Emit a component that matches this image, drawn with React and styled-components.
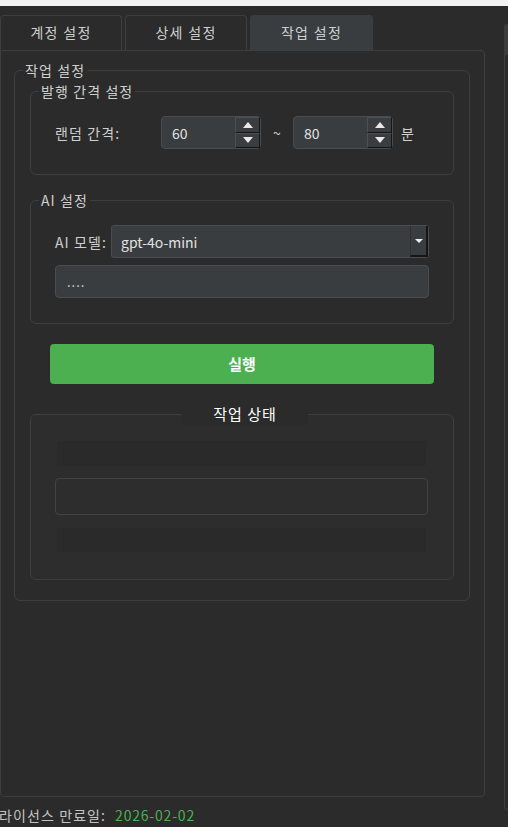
import React from 'react';
import styled, { createGlobalStyle } from 'styled-components';

const fontStack = '"Noto Sans CJK KR", "Noto Sans", "DejaVu Sans", sans-serif';
const pageBg = '#2b2b2b';
const lineColor = '#3e3e3e';
const fieldBg = '#3a3d40';
const fieldBorder = '#4a4d50';
const textColor = '#cfcfcf';
const green = '#4caf50';

const GlobalStyle = createGlobalStyle`
  html, body {
    margin: 0;
    padding: 0;
    background: ${pageBg};
    overflow: hidden;
  }
  body {
    font-family: ${fontStack};
    font-size: 13px;
    color: ${textColor};
  }
`;

const TopStrip = styled.div`
  height: 6px;
  background: #f2f2f2;
`;

const Main = styled.div`
  display: flex;
  align-items: flex-start;
  gap: 19px;
`;

const LeftColumn = styled.div`
  width: 485px;
  flex-shrink: 0;
  display: flex;
  flex-direction: column;
`;

const TabBar = styled.div`
  display: flex;
  gap: 3px;
  margin-top: 9px;
  height: 35px;
`;

const Tab = styled.div`
  width: ${({ w }) => w}px;
  box-sizing: border-box;
  display: flex;
  align-items: center;
  justify-content: center;
  border: 1px solid ${({ active }) => (active ? fieldBg : lineColor)};
  border-bottom: none;
  border-radius: 4px 4px 0 0;
  background: ${({ active }) => (active ? fieldBg : pageBg)};
  color: ${textColor};
  font-size: 14px;
  letter-spacing: 1.3px;
  padding-bottom: 2px;
`;

const Pane = styled.div`
  height: 747px;
  box-sizing: border-box;
  border: 1px solid ${lineColor};
  border-radius: 0 4px 4px 4px;
  padding: 19px 14px 0 13px;
`;

const Group = styled.div`
  position: relative;
  border: 1px solid ${lineColor};
  border-radius: 6px;
  background: ${({ inner }) => inner || 'transparent'};
  padding: ${({ pad }) => pad};
  margin-top: ${({ top }) => top || 0}px;
  display: flex;
  flex-direction: column;
`;

const GroupTitle = styled.span`
  position: absolute;
  top: -9px;
  left: ${({ left }) => left}px;
  padding: 0 2px;
  background: ${pageBg};
  font-size: 14px;
  line-height: 16px;
  letter-spacing: 1.1px;
  color: ${textColor};
`;

const CenterTitle = styled.span`
  position: absolute;
  top: -12px;
  left: 151px;
  width: 126px;
  text-align: center;
  background: ${pageBg};
  font-size: 15px;
  line-height: 22px;
  letter-spacing: 1px;
  color: #ffffff;
`;

const Row = styled.div`
  display: flex;
  align-items: center;
  height: 33px;
`;

const Label = styled.span`
  width: ${({ w }) => w}px;
  flex-shrink: 0;
  font-size: 14px;
  letter-spacing: 1.1px;
  color: ${textColor};
`;

const SpinBox = styled.div`
  width: 100px;
  height: 33px;
  box-sizing: border-box;
  display: flex;
  align-items: center;
  justify-content: space-between;
  background: ${fieldBg};
  border: 1px solid ${fieldBorder};
  border-radius: 4px;
  padding-left: 10px;
  font-size: 14px;
  color: #e2e2e2;
`;

const SpinButtons = styled.div`
  display: flex;
  flex-direction: column;
  align-self: stretch;
  width: 25px;
`;

const SpinButton = styled.div`
  flex: 1;
  display: flex;
  align-items: center;
  justify-content: center;
  background: ${fieldBg};
  border-top: 1px solid #4c5054;
  border-left: 1px solid #4c5054;
  border-bottom: 1px solid #151515;
  border-right: 1px solid #151515;
`;

const Arrow = styled.span`
  width: 0;
  height: 0;
  border-left: 5px solid transparent;
  border-right: 5px solid transparent;
  ${({ dir }) =>
    dir === 'up'
      ? 'border-bottom: 6px solid #e8e8e8;'
      : 'border-top: 6px solid #e8e8e8;'}
`;

const Tilde = styled.span`
  width: 32px;
  text-align: center;
  font-size: 14px;
`;

const Unit = styled.span`
  margin-left: 8px;
  font-size: 14px;
`;

const Combo = styled.div`
  width: 318px;
  height: 33px;
  box-sizing: border-box;
  display: flex;
  align-items: center;
  justify-content: space-between;
  background: ${fieldBg};
  border: 1px solid ${fieldBorder};
  border-radius: 3px;
  padding-left: 9px;
  font-size: 14px;
  color: #e2e2e2;
`;

const ComboButton = styled.div`
  align-self: stretch;
  width: 15px;
  display: flex;
  align-items: center;
  justify-content: center;
  border-left: 1px solid #2e3033;
  border-right: 2px solid #151515;
  border-bottom: 2px solid #151515;
`;

const SmallArrow = styled.span`
  width: 0;
  height: 0;
  border-left: 4px solid transparent;
  border-right: 4px solid transparent;
  border-top: 4px solid #f0f0f0;
`;

const Field = styled.div`
  height: 33px;
  box-sizing: border-box;
  margin-top: 7px;
  display: flex;
  align-items: center;
  background: ${fieldBg};
  border: 1px solid ${fieldBorder};
  border-radius: 4px;
  padding-left: 11px;
  font-size: 13px;
  letter-spacing: 1px;
  color: #d8d8d8;
`;

const RunButton = styled.button`
  margin: 20px 20px 0 20px;
  height: 40px;
  border: none;
  border-radius: 4px;
  background: ${green};
  color: #ffffff;
  font-family: ${fontStack};
  font-size: 15px;
  font-weight: bold;
  padding: 0 0 2px 0;
`;

const StatusRow = styled.div`
  height: ${({ h }) => h}px;
  margin: ${({ m }) => m};
  box-sizing: border-box;
  background: ${({ boxed }) => (boxed ? '#2d2d2d' : '#2a2a2a')};
  border: ${({ boxed }) => (boxed ? '1px solid #424242' : 'none')};
  border-radius: ${({ boxed }) => (boxed ? '4px' : '0')};
`;

const Footer = styled.div`
  margin: 8px 0 0 -1px;
  font-size: 14px;
  line-height: 20px;
  letter-spacing: 1.1px;
  color: #c4c4c4;
  white-space: nowrap;
`;

const DateText = styled.span`
  margin-left: 9px;
  letter-spacing: 0.8px;
  color: ${green};
`;

const RightStub = styled.div`
  margin-top: 18px;
  width: 30px;
  height: 786px;
  flex-shrink: 0;
  box-sizing: border-box;
  border-left: 1px solid ${lineColor};
  border-bottom: 1px solid ${lineColor};
  border-radius: 4px 0 0 4px;
`;

const StubHeader = styled.div`
  height: 31px;
  margin-left: -1px;
  background: ${fieldBg};
  border-radius: 4px 0 0 0;
`;

function Spin({ value }) {
  return (
    <SpinBox>
      <span>{value}</span>
      <SpinButtons>
        <SpinButton>
          <Arrow dir="up" />
        </SpinButton>
        <SpinButton>
          <Arrow dir="down" />
        </SpinButton>
      </SpinButtons>
    </SpinBox>
  );
}

const tabs = [
  { label: '계정 설정', w: 122 },
  { label: '상세 설정', w: 122 },
  { label: '작업 설정', w: 123, active: true },
];

export default function App() {
  return (
    <>
      <GlobalStyle />
      <TopStrip />
      <Main>
        <LeftColumn>
          <TabBar>
            {tabs.map((t) => (
              <Tab key={t.label} w={t.w} active={t.active}>
                {t.label}
              </Tab>
            ))}
          </TabBar>
          <Pane>
            <Group pad="20px 15px 20px 15px">
              <GroupTitle left={8}>작업 설정</GroupTitle>

              <Group pad="24px 24px 25px 24px">
                <GroupTitle left={8}>발행 간격 설정</GroupTitle>
                <Row>
                  <Label w={106}>랜덤 간격:</Label>
                  <Spin value="60" />
                  <Tilde>~</Tilde>
                  <Spin value="80" />
                  <Unit>분</Unit>
                </Row>
              </Group>

              <Group top={25} pad="24px 24px 25px 24px">
                <GroupTitle left={8}>AI 설정</GroupTitle>
                <Row>
                  <Label w={56}>AI 모델:</Label>
                  <Combo>
                    <span>gpt-4o-mini</span>
                    <ComboButton>
                      <SmallArrow />
                    </ComboButton>
                  </Combo>
                </Row>
                <Field>....</Field>
              </Group>

              <RunButton type="button">실행</RunButton>

              <Group top={30} inner="#2d2d2d" pad="26px 25px 27px 24px">
                <CenterTitle>작업 상태</CenterTitle>
                <StatusRow h={25} m="0 2px" />
                <StatusRow h={37} m="12px 0 0 0" boxed />
                <StatusRow h={24} m="13px 2px 0 2px" />
              </Group>
            </Group>
          </Pane>
          <Footer>
            라이선스 만료일:
            <DateText>2026-02-02</DateText>
          </Footer>
        </LeftColumn>
        <RightStub>
          <StubHeader />
        </RightStub>
      </Main>
    </>
  );
}
